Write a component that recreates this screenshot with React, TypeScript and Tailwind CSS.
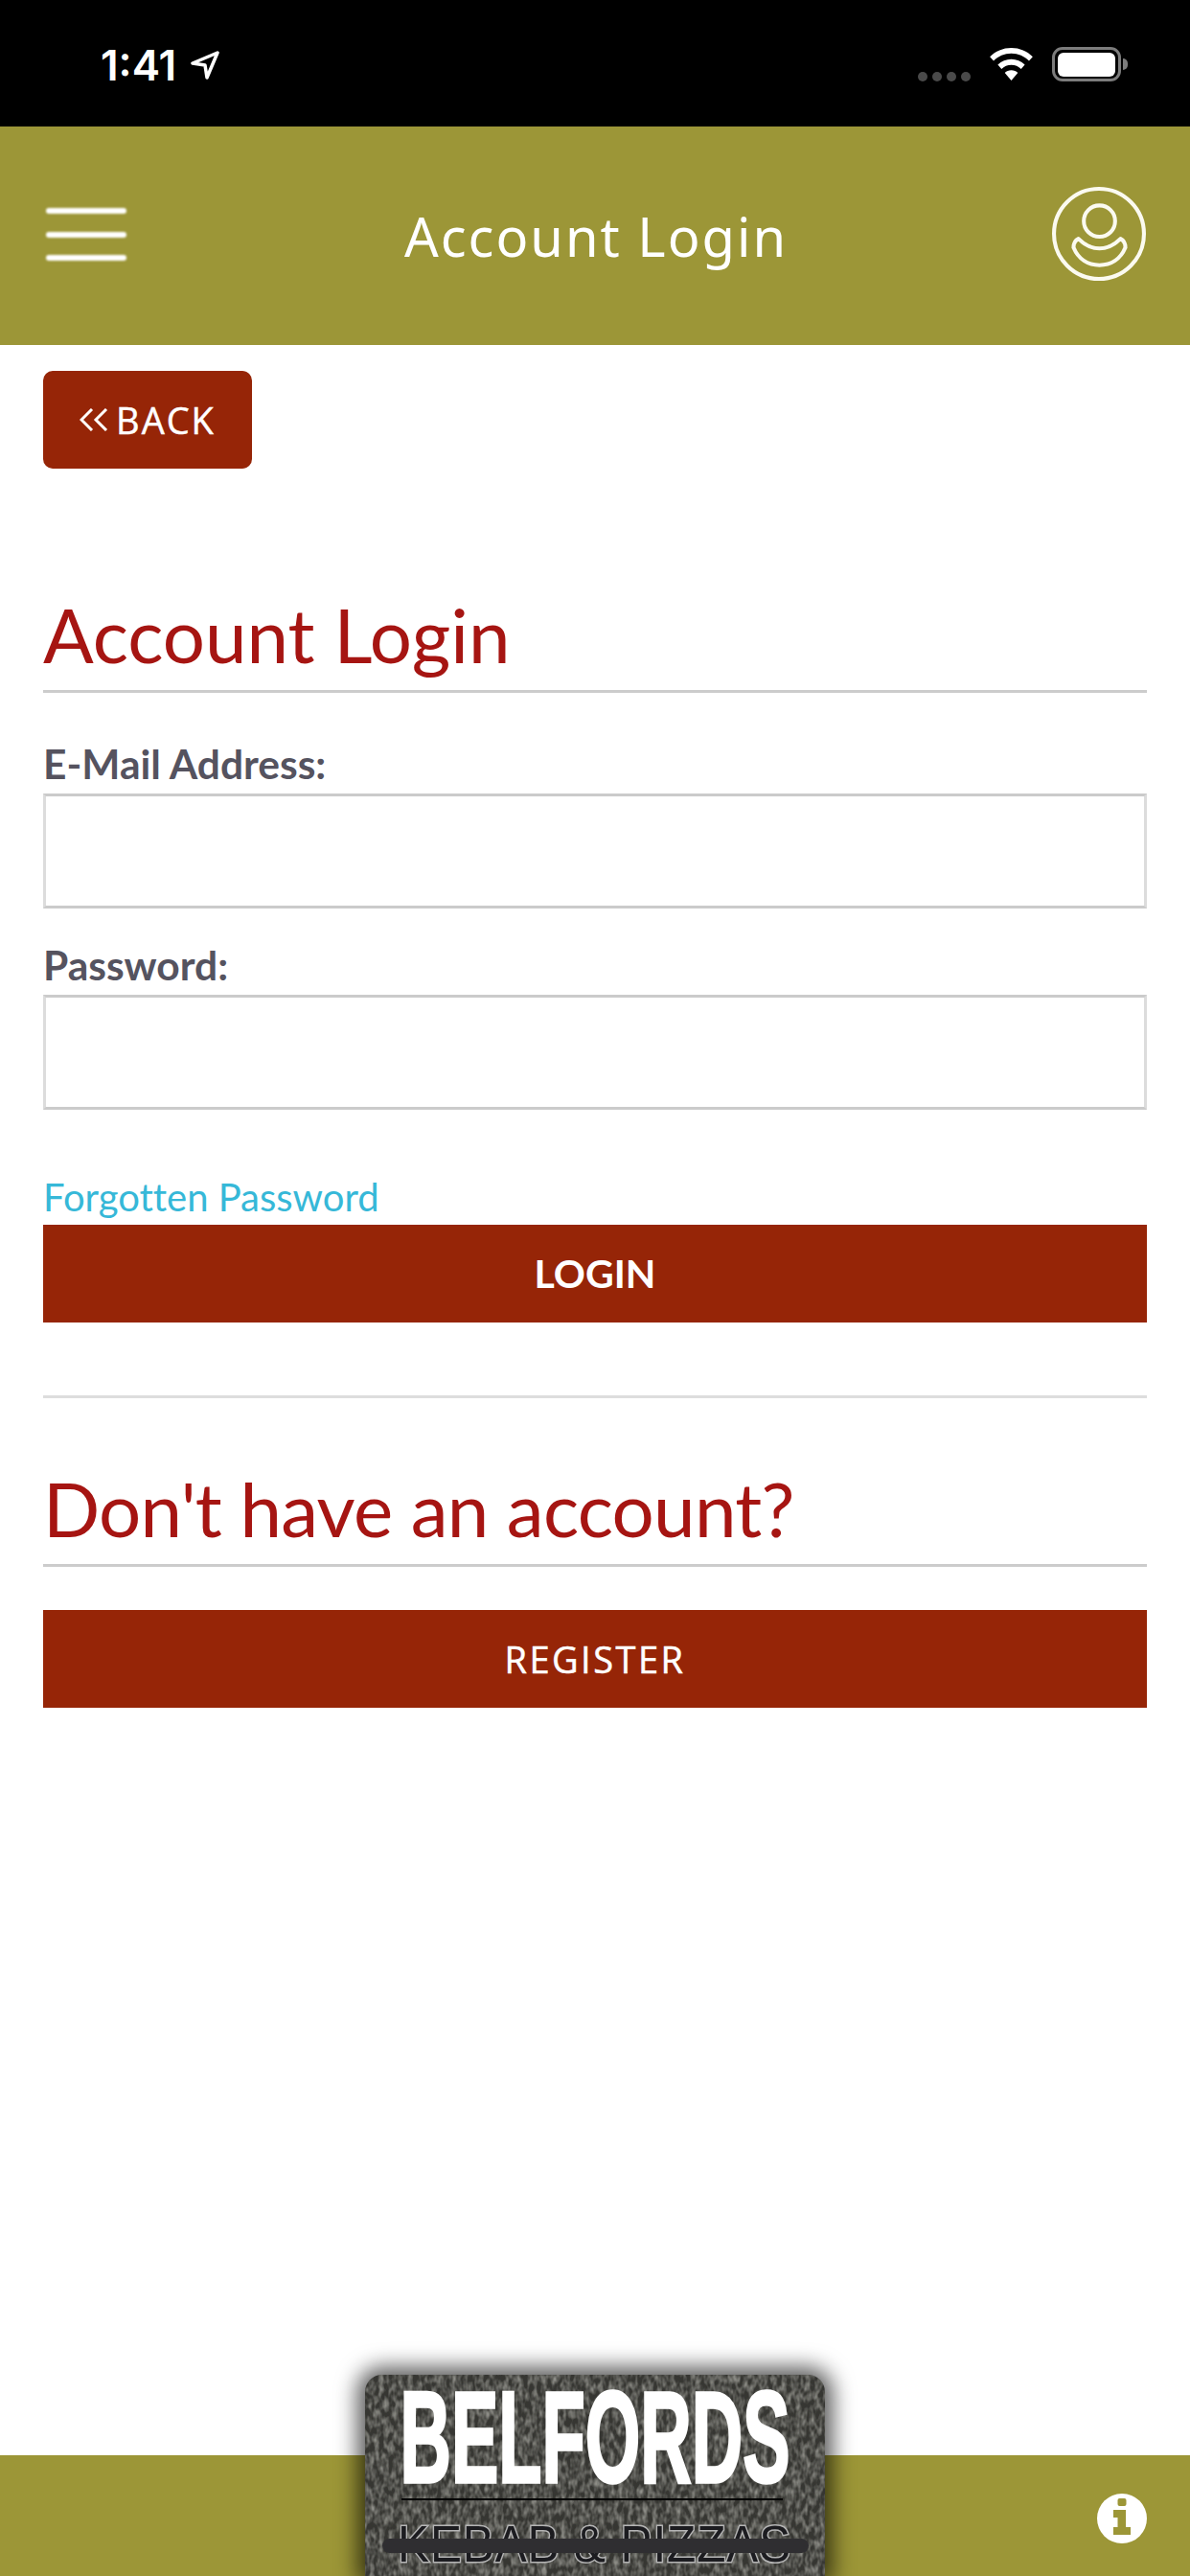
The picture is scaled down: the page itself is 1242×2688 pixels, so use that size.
import React from 'react';

const Field = ({ label, className }: { label: string; className: string }) => (
  <div className={className}>
    <label className="block h-[50px] text-[42.500px] leading-[38px] font-bold text-[#55535f]">{label}</label>
    <input
      type="text"
      className="block w-full h-[120px] border-[3px] border-[#dcdcdc] border-t-[#cbcbcb] border-b-[#cbcbcb] bg-white outline-none"
    />
  </div>
);

const Heading = ({ children, className }: { children: React.ReactNode; className: string }) => (
  <h2 className={`${className} h-[84px] text-[78px] leading-[84px] font-normal text-[#a61512] border-b-[3px] border-[#cccccc] box-content pb-[16px]`}>
    {children}
  </h2>
);

const StatusBar = () => (
  <div className="flex h-[132px] items-center justify-between bg-black pl-[105px] pr-[65px]">
    <div className="flex items-center gap-[15px] mt-[4px]">
      <span className="text-[44px] leading-none font-semibold text-white font-['Inter',sans-serif]">1:41</span>
      <svg width="30" height="30" viewBox="0 0 30 30" fill="none" stroke="white" strokeWidth="3.500" strokeLinejoin="round">
        <path d="M28 2 L2 13 L15 15 L17 28 Z" />
      </svg>
    </div>
    <div className="flex items-center gap-[19px] mt-[2px]">
      <div className="flex items-center gap-[5px] mt-[26px]">
        <span className="h-[10px] w-[10px] rounded-full bg-[#4a4a4a]" />
        <span className="h-[10px] w-[10px] rounded-full bg-[#4a4a4a]" />
        <span className="h-[10px] w-[10px] rounded-full bg-[#4a4a4a]" />
        <span className="h-[10px] w-[10px] rounded-full bg-[#4a4a4a]" />
      </div>
      <svg width="47" height="35" viewBox="0 0 48 36" fill="white">
        <path d="M24 0C15 0 7 3.500 1 9.500L5 14C10 9 16.500 6 24 6s14 3 19 8l4-4.500C41 3.500 33 0 24 0z" />
        <path d="M24 12c-5.500 0-10.500 2.200-14.500 6l4 4.500c2.800-2.700 6.500-4.300 10.500-4.300s7.700 1.600 10.500 4.300l4-4.500c-4-3.800-9-6-14.500-6z" />
        <path d="M24 24c-2.700 0-5.200 1-7 2.800L24 35l7-8.200C29.200 25 26.700 24 24 24z" />
      </svg>
      <div className="flex items-center">
        <div className="flex h-[36px] w-[72px] items-center justify-center rounded-[11px] border-[3px] border-[#7c7c7c]">
          <div className="h-[25px] w-[60px] rounded-[6px] bg-white" />
        </div>
        <div className="ml-[2px] h-[12px] w-[5px] rounded-r-full bg-[#7c7c7c]" />
      </div>
    </div>
  </div>
);

const Header = () => (
  <header className="grid h-[228px] grid-cols-[1fr_auto_1fr] items-center bg-[#9c9637] pl-[48px] pr-[46px]">
    <div className="flex w-[84px] flex-col gap-[18.500px] mb-[3px] blur-[0.8px]">
      <span className="h-[6px] rounded-full bg-white" />
      <span className="h-[6px] rounded-full bg-white" />
      <span className="h-[6px] rounded-full bg-white" />
    </div>
    <h1 className="text-[56px] leading-none font-normal tracking-[2px] text-white font-['Noto_Sans',sans-serif]">Account Login</h1>
    <svg className="justify-self-end mb-[5px] blur-[0.5px]" width="98" height="98" viewBox="0 0 96 96" fill="none" stroke="#fbfaf0" strokeWidth="4">
      <circle cx="48" cy="48" r="46" />
      <circle cx="48.500" cy="35" r="16" />
      <path d="M27 53C34 60 40 63 48.500 63S63 60 70 53C74 55 75 58 75 62C70 74 60 80 48.500 80S27 74 22 62C22 58 23 55 27 53Z" strokeLinejoin="round" />
    </svg>
  </header>
);

const Logo = () => (
  <div className="absolute left-[381px] top-[2478px] h-[210px] w-[480px] rounded-t-[18px] bg-[#363632] shadow-[0_0_22px_8px_rgba(0,0,0,0.65)]">
    <svg className="absolute inset-0 rounded-t-[18px]" width="480" height="210">
      <filter id="grain">
        <feTurbulence type="fractalNoise" baseFrequency="0.2 0.11" numOctaves="2" seed="4" />
        <feColorMatrix values="0 0 0 0 0.34  0 0 0 0 0.34  0 0 0 0 0.31  1.7 0 0 0 -0.6" />
      </filter>
      <rect width="480" height="210" filter="url(#grain)" />
    </svg>
    <div className="absolute left-0 top-[16px] flex h-[100px] w-[480px] items-center justify-center">
      <span className="scale-x-[0.925] scale-y-[1.7] text-[80px] leading-[72px] font-bold whitespace-nowrap text-white [-webkit-text-stroke:2px_white] font-['Liberation_Sans_Narrow','Liberation_Sans',sans-serif]">BELFORDS</span>
    </div>
    <div className="absolute left-[38px] top-[129px] h-[2px] w-[398px] bg-black" />
    <div className="absolute left-0 top-[154px] flex w-[480px] justify-center">
      <span className="scale-x-[0.915] text-[54px] leading-[44px] tracking-[1px] whitespace-nowrap text-[#1c1c20] [-webkit-text-stroke:3px_#b5b5b5] [paint-order:stroke_fill] font-['Liberation_Sans_Narrow','Liberation_Sans',sans-serif]">
        KEBAB &amp; PIZZAS
      </span>
    </div>
    <div className="absolute left-[18px] top-[171px] h-[15px] w-[445px] rounded-full bg-[#2f2e31]" />
  </div>
);

export default function App() {
  return (
    <div className="relative flex h-[2688px] w-[1242px] flex-col overflow-hidden bg-white font-['Lato','Liberation_Sans',sans-serif]">
      <StatusBar />
      <Header />
      <main className="flex flex-1 flex-col px-[45px] pt-[27px]">
        <button className="flex h-[102px] w-[218px] items-center justify-center gap-[8px] rounded-[10px] bg-[#962507] text-[38px] font-medium tracking-[2px] text-white [-webkit-text-stroke:0.5px_white] font-['Open_Sans',sans-serif]">
          <svg width="30" height="24" viewBox="0 0 30 24" fill="none" stroke="white" strokeWidth="3">
            <path d="M13 1 L2 12 L13 23 M28 1 L17 12 L28 23" />
          </svg>
          BACK
        </button>
        <Heading className="mt-[131px]">Account Login</Heading>
        <Field label="E-Mail Address:" className="mt-[55px]" />
        <Field label="Password:" className="mt-[40px]" />
        <a className="mt-[66px] block h-[54px] text-[40px] leading-[50px] text-[#36b8d8] [font-variant-ligatures:none]">Forgotten Password</a>
        <button className="h-[102px] w-full bg-[#962507] text-[41px] font-bold text-white">LOGIN</button>
        <div className="mt-[76px] h-[3px] bg-[#dddddd]" />
        <Heading className="mt-[73px] tracking-[-0.7px]">Don't have an account?</Heading>
        <button className="mt-[45px] h-[102px] w-full bg-[#962507] text-[38px] font-medium tracking-[2.500px] text-white [-webkit-text-stroke:0.5px_white] font-['Open_Sans',sans-serif]">REGISTER</button>
      </main>
      <footer className="flex h-[126px] items-center justify-end bg-[#9c9637] pr-[45px]">
        <svg className="mt-[5px]" width="52" height="52" viewBox="0 0 52 52">
          <circle cx="26" cy="26" r="26" fill="white" />
          <rect x="21.500" y="5" width="9" height="8" rx="2" fill="#9c9637" />
          <path d="M17 17h13v18h5v8H17v-8h4.500V25H17z" fill="#9c9637" />
        </svg>
      </footer>
      <Logo />
    </div>
  );
}
